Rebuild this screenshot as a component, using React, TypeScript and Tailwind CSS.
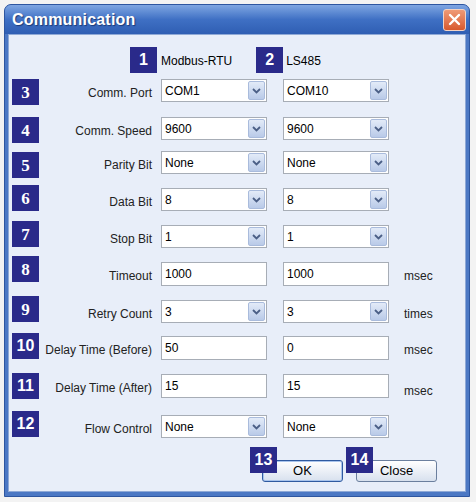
import React from 'react'

type Row = {
  n: string
  serif?: boolean
  label: string
  kind: 'select' | 'input'
  a: string
  b: string
  unit?: string
  h: string
  fieldDy: string
  badgeDy?: string
  unitDy?: string
  fieldH: string
}

const rows: Row[] = [
  { n: '3', serif: true, label: 'Comm. Port', kind: 'select', a: 'COM1', b: 'COM10', h: 'h-[38px]', fieldDy: 'mt-0', fieldH: 'h-[23px]' },
  { n: '4', serif: true, label: 'Comm. Speed', kind: 'select', a: '9600', b: '9600', h: 'h-[34px]', fieldDy: 'mt-0', fieldH: 'h-[23px]' },
  { n: '5', serif: true, label: 'Parity Bit', kind: 'select', a: 'None', b: 'None', h: 'h-[34px]', fieldDy: 'mt-0', badgeDy: 'mt-[1px]', fieldH: 'h-[23px]' },
  { n: '6', serif: true, label: 'Data Bit', kind: 'select', a: '8', b: '8', h: 'h-[36px]', fieldDy: 'mt-[3px]', fieldH: 'h-[23px]' },
  { n: '7', serif: true, label: 'Stop Bit', kind: 'select', a: '1', b: '1', h: 'h-[35px]', fieldDy: 'mt-[4px]', fieldH: 'h-[23px]' },
  { n: '8', serif: true, label: 'Timeout', kind: 'input', a: '1000', b: '1000', unit: 'msec', h: 'h-[40px]', fieldDy: 'mt-[6px]', fieldH: 'h-[24px]' },
  { n: '9', serif: true, label: 'Retry Count', kind: 'select', a: '3', b: '3', unit: 'times', h: 'h-[37px]', fieldDy: 'mt-[4px]', fieldH: 'h-[23px]' },
  { n: '10', label: 'Delay Time (Before)', kind: 'input', a: '50', b: '0', unit: 'msec', h: 'h-[40px]', fieldDy: 'mt-[3px]', fieldH: 'h-[24px]' },
  { n: '11', label: 'Delay Time (After)', kind: 'input', a: '15', b: '15', unit: 'msec', h: 'h-[38px]', fieldDy: 'mt-[1px]', unitDy: 'pt-[9px]', fieldH: 'h-[24px]' },
  { n: '12', label: 'Flow Control', kind: 'select', a: 'None', b: 'None', h: 'h-[36px]', fieldDy: 'mt-[4px]', fieldH: 'h-[23px]' },
]

function Badge({ n, serif, className = '' }: { n: string; serif?: boolean; className?: string }) {
  return (
    <div
      className={`w-[27px] h-[26px] shrink-0 bg-[#2a2a8a] text-white font-bold flex items-center justify-center leading-none ${
        serif ? "font-['Liberation_Serif',serif] text-[17px]" : "font-['Liberation_Sans',sans-serif] text-[16px]"
      } ${className}`}
    >
      {n}
    </div>
  )
}

function Select({ value, h }: { value: string; h: string }) {
  return (
    <div className={`w-[106px] ${h} bg-white border border-[#a7adb6] flex items-center relative`}>
      <span className="pl-[3px] pt-[1px] text-[12px] text-black">{value}</span>
      <div className="absolute right-[1px] top-[1px] bottom-[1px] w-[17px] rounded-[2px] border border-[#a9bbdc] bg-gradient-to-b from-[#e3ebf8] to-[#b9cae8] flex items-center justify-center">
        <svg width="9" height="6" viewBox="0 0 9 6">
          <path d="M1 1 L4.5 4.5 L8 1" stroke="#4b5f86" strokeWidth="1.8" fill="none" />
        </svg>
      </div>
    </div>
  )
}

function Input({ value, h }: { value: string; h: string }) {
  return (
    <div className={`w-[106px] ${h} bg-white border border-[#a7adb6] flex items-center`}>
      <span className="pl-[3px] text-[12px] text-black">{value}</span>
    </div>
  )
}

export default function App() {
  return (
    <div className="w-[476px] h-[502px] bg-[#f3f3f3] pt-[4px] pl-[4px] font-['Liberation_Sans',sans-serif] text-[#222]">
      <div className="w-[466px] h-[493px] rounded-t-[7px] bg-[#4c78c4] border border-[#2e56a0] flex flex-col">
        {/* title bar */}
        <div className="h-[29px] shrink-0 rounded-t-[6px] bg-gradient-to-b from-[#7fa6e2] via-[#3f70c4] to-[#2f5eb3] flex items-center justify-between pl-[7px] pr-[3px]">
          <span className="text-white font-bold text-[16px] [text-shadow:1px_1px_1px_#1c3a78] tracking-[0.2px]">
            Communication
          </span>
          <div className="w-[23px] h-[22px] rounded-[3px] border border-[#f3d3c4] bg-gradient-to-b from-[#ef9a76] to-[#d8582c] flex items-center justify-center">
            <svg width="13" height="13" viewBox="0 0 13 13">
              <path d="M2 2 L11 11 M11 2 L2 11" stroke="white" strokeWidth="2.4" strokeLinecap="round" />
            </svg>
          </div>
        </div>

        {/* client area */}
        <div className="mx-[3px] mb-[4px] flex-1 bg-[#e8eef9] border border-[#8fa9d6]">
          <div className="mt-[12px] flex items-center">
            <Badge n="1" className="ml-[121px]" />
            <span className="ml-[4px] text-[12px] text-black pt-[2px]">Modbus-RTU</span>
            <Badge n="2" className="ml-[24px]" />
            <span className="ml-[3px] text-[12px] text-black pt-[2px]">LS485</span>
          </div>

          <div className="mt-[6px] pl-[3px]">
            {rows.map((r) => (
              <div key={r.n} className={`flex items-start ${r.h}`}>
                <Badge n={r.n} serif={r.serif} className={r.badgeDy ?? ''} />
                <div className={`w-[122px] ${r.fieldH} ${r.fieldDy} pr-[9px] pt-[4px] flex items-center justify-end text-[12px] text-[#222] whitespace-nowrap`}>
                  {r.label}
                </div>
                <div className={r.fieldDy}>
                  {r.kind === 'select' ? <Select value={r.a} h={r.fieldH} /> : <Input value={r.a} h={r.fieldH} />}
                </div>
                <div className={`ml-[16px] ${r.fieldDy}`}>
                  {r.kind === 'select' ? <Select value={r.b} h={r.fieldH} /> : <Input value={r.b} h={r.fieldH} />}
                </div>
                {r.unit && (
                  <div className={`ml-[15px] ${r.fieldDy} ${r.fieldH} ${r.unitDy ?? 'pt-[4px]'} flex items-center text-[12px] text-[#222]`}>
                    {r.unit}
                  </div>
                )}
              </div>
            ))}

            {/* buttons */}
            <div className="flex pt-[11px]">
              <div className="relative ml-[250px]">
                <button className="w-[81px] h-[22px] rounded-[3px] border border-[#2f5aa0] bg-gradient-to-b from-white to-[#d8e1ee] text-[13px] text-black shadow-[inset_0_0_0_1px_#a9c4ec]">
                  OK
                </button>
                <Badge n="13" className="absolute left-[-12px] top-[-11px]" />
              </div>
              <div className="relative ml-[13px]">
                <button className="w-[81px] h-[22px] rounded-[3px] border border-[#6b7f9e] bg-gradient-to-b from-white to-[#d8e1ee] text-[13px] text-black">
                  Close
                </button>
                <Badge n="14" className="absolute left-[-10px] top-[-11px]" />
              </div>
            </div>
          </div>
        </div>
      </div>
    </div>
  )
}
